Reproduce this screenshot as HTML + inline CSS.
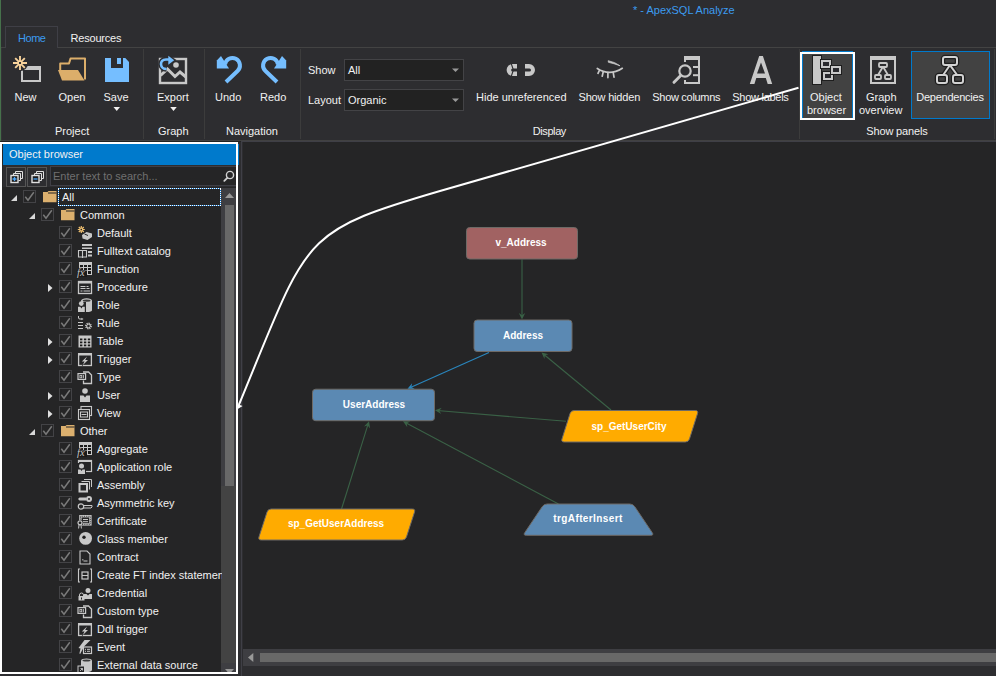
<!DOCTYPE html>
<html><head><meta charset="utf-8">
<style>
*{margin:0;padding:0;box-sizing:border-box}
html,body{width:996px;height:676px;overflow:hidden;background:#2d2d30;font-family:"Liberation Sans",sans-serif;font-size:11px;color:#f1f1f1}
.a{position:absolute}
.t{position:absolute;white-space:nowrap;line-height:13px}
.sep{position:absolute;width:1px;background:#3c3c3c}
svg{position:absolute;overflow:visible}
</style></head><body>
<!-- title bar -->
<div class="a" style="left:0;top:0;width:1px;height:141px;background:#46714b"></div><div class="a" style="left:1px;top:48px;width:1px;height:92px;background:#343437"></div>
<div class="t" style="left:633px;top:4px;color:#3c9bef;font-size:11px">* - ApexSQL Analyze</div>
<!-- tabs -->
<div class="a" style="left:1px;top:47px;width:995px;height:1px;background:#434343"></div>
<div class="a" style="left:5px;top:26px;width:53px;height:22px;border:1px solid #3f3f46;border-bottom:none;background:#2d2d30"></div>
<div class="t" style="left:18px;top:32px;color:#3c9bef;letter-spacing:-0.45px">Home</div>
<div class="t" style="left:70.5px;top:32px;letter-spacing:-0.2px">Resources</div>
<!-- ribbon bottom -->
<div class="a" style="left:1px;top:140px;width:995px;height:1px;background:#414141"></div>
<div class="a" style="left:0;top:141px;width:996px;height:535px;background:#2d2d30"></div>
<div class="a" style="left:0;top:141px;width:241px;height:1px;background:#222222"></div>
<!-- separators -->
<div class="sep" style="left:143px;top:49px;height:90px"></div>
<div class="sep" style="left:204px;top:49px;height:90px"></div>
<div class="sep" style="left:300px;top:49px;height:90px"></div>
<div class="sep" style="left:799px;top:49px;height:90px"></div>
<div class="sep" style="left:994px;top:49px;height:90px"></div>


<!-- RIBBON ICONS -->
<svg class="a" style="left:0;top:0" width="996" height="141" viewBox="0 0 996 141">
 <!-- New -->
 <g stroke="#2d2d30" stroke-width="0">
 </g>
 <rect x="22" y="67" width="18" height="14" fill="none" stroke="#c8c8c8" stroke-width="2"/>
 <rect x="21" y="66" width="20" height="4" fill="#c8c8c8"/>
 <circle cx="20" cy="63" r="8.2" fill="#2d2d30"/>
 <g stroke="#f7d29b" stroke-width="1.9">
  <path d="M20,56 V70 M13,63 H27 M15.2,58.2 L24.8,67.8 M24.8,58.2 L15.2,67.8"/>
 </g>
 <rect x="19" y="62" width="2" height="2" fill="#2d2d30"/>
 <!-- Open -->
 <path d="M60.2,70 V63.5 H69 L70.5,58.6 H85 V79.5" fill="none" stroke="#dcae6a" stroke-width="2" stroke-linejoin="round"/>
 <path d="M58,70 H78 L84.5,80.5 H62 Z" fill="#dcae6a"/>
 <!-- Save -->
 <path d="M105,58 H125.3 L129,62 V82 H105 Z M111,58 V68 H123 V58 Z" fill="#75beff" fill-rule="evenodd"/>
 <rect x="117" y="58" width="4" height="6" fill="#75beff"/>
 <path d="M113.5,107 h6.5 l-3.25,4 z" fill="#f1f1f1"/>
 <!-- Export -->
 <rect x="160" y="59" width="26" height="24" fill="none" stroke="#c8c8c8" stroke-width="2.4"/>
 <polyline points="160.5,75.5 167.5,69 175,76.5 180,72 186,77" fill="none" stroke="#c8c8c8" stroke-width="3"/>
 <circle cx="176" cy="65" r="2.8" fill="#c8c8c8"/>
 <path d="M166.5,69 C159.5,69 159,59.5 166,59.5 H169" fill="none" stroke="#2d2d30" stroke-width="5.5"/>
 <path d="M167.5,54 L176.5,60 L167.5,66.5 Z" fill="#2d2d30"/>
 <path d="M166.5,69 C159.5,69 159,59.5 166,59.5 H169" fill="none" stroke="#75beff" stroke-width="2.6"/>
 <path d="M168.3,55.8 L174.2,60.3 L168.3,64.8 Z" fill="#75beff"/>
 <path d="M170.25,107 h6.5 l-3.25,4 z" fill="#f1f1f1"/>
 <!-- Undo -->
 <g transform="translate(216,55)">
  <path d="M9,9.5 A7.5,7.5 0 1 1 21.5,16 L10,27" fill="none" stroke="#75beff" stroke-width="4" stroke-linejoin="round"/>
  <path d="M5,1 L0.8,5.5 V13.6 H13 Z" fill="#75beff"/>
 </g>
 <!-- Redo -->
 <g transform="translate(287,55) scale(-1,1)">
  <path d="M9,9.5 A7.5,7.5 0 1 1 21.5,16 L10,27" fill="none" stroke="#75beff" stroke-width="4" stroke-linejoin="round"/>
  <path d="M5,1 L0.8,5.5 V13.6 H13 Z" fill="#75beff"/>
 </g>
 <!-- combos -->
 <rect x="344.5" y="59.5" width="119" height="21" fill="#222222" stroke="#434346"/>
 <rect x="344.5" y="89.5" width="119" height="21" fill="#222222" stroke="#434346"/>
 <path d="M452,68.5 h7 l-3.5,3.5 z" fill="#999"/>
 <path d="M452,98.5 h7 l-3.5,3.5 z" fill="#999"/>
 <!-- Hide unreferenced -->
 <path d="M517,64 H512.6 A6,6 0 0 0 512.6,76 H517 V71.5 H512.6 A1.5,1.5 0 0 1 512.6,68.5 H517 Z" fill="#c8c8c8"/>
 <path d="M511.2,63.5 L513.4,70 L511.2,76.5" fill="none" stroke="#2d2d30" stroke-width="1.1"/>
 <path d="M525,64 H529 A6,6 0 0 1 529,76 H525 V71.5 H529.5 A1.5,1.5 0 0 0 529.5,68.5 H525 Z" fill="#c8c8c8"/>
 <!-- Show hidden (eye) -->
 <g fill="none" stroke="#c8c8c8" stroke-width="1.7" stroke-linecap="round">
  <path d="M597.3,68.5 Q609.5,76.5 622.3,68.3"/>
  <path d="M599.3,70.6 L598,73.3 M603.2,72 L602.2,76.2 M607.9,72.6 V77.6 M613.2,72.4 L614,77.2"/>
 </g>
 <path d="M608.2,60.7 Q615,62 620,65.8 Q614,63.5 608.4,62.3 Z" fill="#c8c8c8" stroke="#c8c8c8" stroke-width="0.8" stroke-linejoin="round"/>
 <!-- Show columns -->
 <path d="M685,62 V57 H699 V83 H685 V80" fill="none" stroke="#c8c8c8" stroke-width="2"/>
 <rect x="684" y="56" width="16" height="4" fill="#c8c8c8"/>
 <rect x="693" y="66" width="7" height="2" fill="#c8c8c8"/>
 <rect x="693" y="74.2" width="7" height="2" fill="#c8c8c8"/>
 <circle cx="685" cy="71" r="7.8" fill="#2d2d30"/>
 <circle cx="685" cy="71" r="5.7" fill="none" stroke="#c8c8c8" stroke-width="2.2"/>
 <path d="M680.5,75.8 L674,82.3" stroke="#c8c8c8" stroke-width="3" stroke-linecap="round"/>
 <!-- A -->
 <path d="M759.2,56 H762.9 L772.2,84 H767.7 L765.8,78.1 H756.3 L754.4,84 H749.8 Z M761,62.4 L757,73.6 H765 Z" fill="#c8c8c8" fill-rule="evenodd"/>
 <!-- Object browser button -->
 <rect x="802.5" y="51.5" width="50" height="67" fill="#424242" stroke="#007acc"/>
 <rect x="801" y="53" width="53" height="66" fill="none" stroke="#fff" stroke-width="2"/>
 <rect x="812" y="55" width="10" height="30" fill="#1e1e1e"/>
 <rect x="813" y="56" width="8" height="28" fill="#c8c8c8"/>
 <rect x="820" y="59" width="12" height="10" fill="#1e1e1e"/>
 <rect x="822" y="61" width="8" height="6" fill="#2a2a2e" stroke="#c8c8c8" stroke-width="2"/>
 <rect x="822" y="71" width="12" height="10" fill="#1e1e1e"/>
 <rect x="824" y="73" width="8" height="6" fill="#2a2a2e" stroke="#c8c8c8" stroke-width="2"/>
 <rect x="830" y="65" width="12" height="10" fill="#1e1e1e"/>
 <rect x="832" y="67" width="8" height="6" fill="#2a2a2e" stroke="#c8c8c8" stroke-width="2"/>
 <!-- Graph overview -->
 <rect x="871" y="57" width="24" height="26" fill="none" stroke="#c8c8c8" stroke-width="2"/>
 <rect x="870" y="56" width="26" height="4" fill="#c8c8c8"/>
 <g fill="none" stroke="#c8c8c8" stroke-width="1.8">
  <rect x="879" y="63" width="8" height="4" rx="1"/>
  <rect x="875" y="75" width="6" height="4" rx="1"/>
  <rect x="885" y="75" width="6" height="4" rx="1"/>
  <path d="M882.5,67.5 L878,75 M883.5,67.5 L888,75"/>
 </g>
 <!-- Dependencies button -->
 <rect x="911.5" y="51.5" width="78" height="67" fill="#424242" stroke="#007acc"/>
 <g fill="none" stroke="#1e1e1e" stroke-width="4.5" stroke-linejoin="round">
  <rect x="943" y="57" width="14" height="8" rx="2"/>
  <rect x="937" y="75" width="10" height="8" rx="2"/>
  <rect x="953" y="75" width="10" height="8" rx="2"/>
  <path d="M949.5,65.8 L943.5,74.5 M950.5,65.8 L956.8,74.5"/>
 </g>
 <g fill="none" stroke="#d2d2d2" stroke-width="2" stroke-linejoin="round">
  <rect x="943" y="57" width="14" height="8" rx="2"/>
  <rect x="937" y="75" width="10" height="8" rx="2"/>
  <rect x="953" y="75" width="10" height="8" rx="2"/>
  <path d="M949.5,65.8 L943.5,74.5 M950.5,65.8 L956.8,74.5"/>
 </g>
</svg>
<!-- RIBBON LABELS -->
<div class="t" style="left:14.5px;top:91px">New</div>
<div class="t" style="left:58.5px;top:91px">Open</div>
<div class="t" style="left:103.5px;top:91px">Save</div>
<div class="t" style="left:55px;top:125px">Project</div>
<div class="t" style="left:157px;top:91px">Export</div>
<div class="t" style="left:158px;top:125px">Graph</div>
<div class="t" style="left:215px;top:91px">Undo</div>
<div class="t" style="left:260px;top:91px">Redo</div>
<div class="t" style="left:226px;top:125px">Navigation</div>
<div class="t" style="left:308px;top:64px">Show</div>
<div class="t" style="left:308px;top:94px">Layout</div>
<div class="t" style="left:348px;top:64px">All</div>
<div class="t" style="left:348px;top:94px">Organic</div>
<div class="t" style="left:476px;top:91px">Hide unreferenced</div>
<div class="t" style="left:532.7px;top:125px;letter-spacing:-0.4px">Display</div>
<div class="t" style="left:578.5px;top:91px;letter-spacing:-0.18px">Show hidden</div>
<div class="t" style="left:652.3px;top:91px;letter-spacing:-0.3px">Show columns</div>
<div class="t" style="left:732.3px;top:91px;letter-spacing:-0.28px">Show labels</div>
<div class="t" style="left:810px;top:91px">Object</div>
<div class="t" style="left:807px;top:104px">browser</div>
<div class="t" style="left:866px;top:91px">Graph</div>
<div class="t" style="left:859px;top:104px">overview</div>
<div class="t" style="left:916.3px;top:91px;letter-spacing:-0.25px">Dependencies</div>
<div class="t" style="left:866.3px;top:125px;letter-spacing:-0.15px">Show panels</div>

<!-- CANVAS -->
<div class="a" style="left:241px;top:141px;width:1px;height:535px;background:#3f3f46"></div>
<div class="a" style="left:241px;top:141px;width:755px;height:1px;background:#3f3f46"></div>
<div class="a" style="left:243px;top:142px;width:753px;height:507px;background:#252526"></div>
<div class="a" style="left:243px;top:649px;width:753px;height:17px;background:#3e3e42"></div>
<div class="a" style="left:260px;top:653px;width:736px;height:9px;background:#686868"></div>
<svg class="a" style="left:0;top:0" width="996" height="676"><path d="M248,657.5 L253.3,653 V662 Z" fill="#999"/></svg>
<div class="a" style="left:242px;top:666px;width:754px;height:10px;background:#2d2d30"></div>

<!-- GRAPH -->
<svg class="a" style="left:0;top:0" width="996" height="676">
<line x1="522" y1="259.5" x2="522.00" y2="317.50" stroke="#3a6146" stroke-width="1.1"/><path d="M522.00,319.50 L518.80,313.00 L522.00,315.20 L525.20,313.00 Z" fill="#3a6146"/>
<line x1="489" y1="352.5" x2="409.33" y2="387.99" stroke="#2a86bd" stroke-width="1.1"/><path d="M407.50,388.80 L412.14,383.23 L411.43,387.05 L414.74,389.08 Z" fill="#2a86bd"/>
<line x1="611" y1="410" x2="543.04" y2="353.77" stroke="#3a6146" stroke-width="1.1"/><path d="M541.50,352.50 L548.55,354.18 L544.81,355.24 L544.47,359.11 Z" fill="#3a6146"/>
<line x1="566" y1="421.3" x2="436.99" y2="410.47" stroke="#3a6146" stroke-width="1.1"/><path d="M435.00,410.30 L441.74,407.66 L439.28,410.66 L441.21,414.03 Z" fill="#3a6146"/>
<line x1="341.5" y1="509" x2="368.40" y2="423.21" stroke="#3a6146" stroke-width="1.1"/><path d="M369.00,421.30 L370.11,428.46 L367.71,425.40 L364.00,426.54 Z" fill="#3a6146"/>
<line x1="558.5" y1="504" x2="404.77" y2="422.24" stroke="#3a6146" stroke-width="1.1"/><path d="M403.00,421.30 L410.24,421.53 L406.80,423.32 L407.24,427.18 Z" fill="#3a6146"/>
<path d="M466.50,230.70 Q466.5,227.5 469.70,227.50 L574.30,227.50 Q577.5,227.5 577.50,230.70 L577.50,255.80 Q577.5,259 574.30,259.00 L469.70,259.00 Q466.5,259 466.50,255.80 Z" fill="#a16262" stroke="#6e6a66" stroke-width="1"/>
<text x="521" y="246" text-anchor="middle" font-family="Liberation Sans" font-weight="bold" font-size="10" fill="#fff" letter-spacing="0">v_Address</text>
<path d="M474.00,323.20 Q474,320 477.20,320.00 L568.80,320.00 Q572,320 572.00,323.20 L572.00,348.30 Q572,351.5 568.80,351.50 L477.20,351.50 Q474,351.5 474.00,348.30 Z" fill="#5b89b3" stroke="#6e6a66" stroke-width="1"/>
<text x="523" y="339" text-anchor="middle" font-family="Liberation Sans" font-weight="bold" font-size="10" fill="#fff" letter-spacing="0">Address</text>
<path d="M312.50,392.40 Q312.5,389.2 315.70,389.20 L431.30,389.20 Q434.5,389.2 434.50,392.40 L434.50,417.50 Q434.5,420.7 431.30,420.70 L315.70,420.70 Q312.5,420.7 312.50,417.50 Z" fill="#5b89b3" stroke="#6e6a66" stroke-width="1"/>
<text x="374" y="408" text-anchor="middle" font-family="Liberation Sans" font-weight="bold" font-size="10" fill="#fff" letter-spacing="0">UserAddress</text>
<path d="M570.03,413.55 Q571,410.5 574.20,410.50 L695.30,410.50 Q698.5,410.5 697.53,413.55 L689.47,438.95 Q688.5,442 685.30,442.00 L564.20,442.00 Q561,442 561.97,438.95 Z" fill="#ffab00" stroke="#6e6a66" stroke-width="1"/>
<text x="629" y="430" text-anchor="middle" font-family="Liberation Sans" font-weight="bold" font-size="10" fill="#fff" letter-spacing="0">sp_GetUserCity</text>
<path d="M267.02,512.05 Q268,509 271.20,509.00 L412.30,509.00 Q415.5,509 414.52,512.05 L406.48,536.95 Q405.5,540 402.30,540.00 L261.20,540.00 Q258,540 258.98,536.95 Z" fill="#ffab00" stroke="#6e6a66" stroke-width="1"/>
<text x="336" y="527" text-anchor="middle" font-family="Liberation Sans" font-weight="bold" font-size="10" fill="#fff" letter-spacing="0">sp_GetUserAddress</text>
<path d="M542.22,506.66 Q544,504 547.20,504.00 L629.80,504.00 Q633,504 634.78,506.66 L652.22,532.64 Q654,535.3 650.80,535.30 L526.20,535.30 Q523,535.3 524.78,532.64 Z" fill="#5b89b3" stroke="#6e6a66" stroke-width="1"/>
<text x="588" y="522" text-anchor="middle" font-family="Liberation Sans" font-weight="bold" font-size="10" fill="#fff" letter-spacing="0.4">trgAfterInsert</text>
</svg>
<!-- /GRAPH -->
<!-- PANEL -->
<div class="a" style="left:2px;top:144px;width:234px;height:528px;background:#252526"></div>
<div class="a" style="left:3px;top:144px;width:236px;height:21px;background:#007acc"></div>
<div class="t" style="left:9px;top:148px">Object browser</div>


<!-- toolbar -->
<div class="a" style="left:3px;top:165px;width:233px;height:22px;background:#2d2d30"></div>
<div class="a" style="left:6px;top:167px;width:20px;height:20px;border:1px solid #555;background:#2d2d30"></div>
<div class="a" style="left:27px;top:167px;width:20px;height:20px;border:1px solid #555;background:#2d2d30"></div>
<div class="a" style="left:50px;top:166px;width:186px;height:20px;background:#252526;border-top:1px solid #3f3f46;border-bottom:1px solid #3f3f46;border-left:1px solid #3f3f46"></div>
<div class="t" style="left:53px;top:170px;color:#707070">Enter text to search...</div>
<svg class="a" style="left:0;top:160px" width="240" height="30">
 <g fill="none" stroke="#e0e0e0" stroke-width="1">
  <path d="M15.5,13.5 V11.5 H22.5 V18.5 H20.5"/>
  <path d="M13.5,15.5 V13.5 H20.5 V20.5 H18.5"/>
  <path d="M36.5,13.5 V11.5 H43.5 V18.5 H41.5"/>
  <path d="M34.5,15.5 V13.5 H41.5 V20.5 H39.5"/>
 </g>
 <rect x="11" y="15.5" width="7" height="7" fill="#1e1e1e" stroke="#e0e0e0" stroke-width="1.4"/>
 <rect x="32" y="15.5" width="7" height="7" fill="#1e1e1e" stroke="#e0e0e0" stroke-width="1.4"/>
 <path d="M12.5,19 H16.5 M14.5,17 V21" stroke="#4aa8ff" stroke-width="1.3"/>
 <path d="M33.5,19 H37.5" stroke="#4aa8ff" stroke-width="1.3"/>
 <circle cx="230" cy="15" r="3.6" fill="none" stroke="#d0d0d0" stroke-width="1.4"/>
 <path d="M227.3,17.8 L224.3,20.8" stroke="#d0d0d0" stroke-width="1.8" stroke-linecap="round"/>
</svg>
<!-- vscroll -->
<div class="a" style="left:221px;top:188px;width:15px;height:484px;background:#3e3e42"></div>
<div class="a" style="left:221px;top:486px;width:15px;height:177px;background:#434343"></div>
<div class="a" style="left:225px;top:205px;width:9px;height:281px;background:#686868"></div>
<svg class="a" style="left:220px;top:188px" width="18" height="486">
 <path d="M225,198 L229.5,193 L234,198 Z" transform="translate(-220,-188)" fill="#999"/>
 <path d="M225,669 L229.5,674 L234,669 Z" transform="translate(-220,-188)" fill="#999"/>
</svg>
<!-- TREE -->
<div class="a" style="left:3px;top:187px;width:219px;height:485px;overflow:hidden">
<svg class="a" style="left:-3px;top:-187px" width="240" height="700">
<path d="M11,201 L17,195 V201 Z" fill="#d8d8d8"/>
<rect x="23.5" y="190.5" width="12" height="12" fill="none" stroke="#434346"/>
<path d="M25.3,196.8 L28,200.2 L33.8,192.3" fill="none" stroke="#7a7a7a" stroke-width="1.5"/>
<path d="M43,192 H47.5 L48.5,191 H56.5 V202.2 H43 Z" fill="#dcb06e"/><path d="M48,193 H56.5" stroke="#252526" stroke-width="1"/>
<path d="M29,219 L35,213 V219 Z" fill="#d8d8d8"/>
<rect x="41.5" y="208.5" width="12" height="12" fill="none" stroke="#434346"/>
<path d="M43.3,214.8 L46,218.2 L51.8,210.3" fill="none" stroke="#7a7a7a" stroke-width="1.5"/>
<path d="M61,210 H65.5 L66.5,209 H74.5 V220.2 H61 Z" fill="#dcb06e"/><path d="M66,211 H74.5" stroke="#252526" stroke-width="1"/>
<rect x="59.5" y="226.5" width="12" height="12" fill="none" stroke="#434346"/>
<path d="M61.3,232.8 L64,236.2 L69.8,228.3" fill="none" stroke="#7a7a7a" stroke-width="1.5"/>
<g transform="translate(77,225)"><path d="M5,10 L9.5,7 L15,8.5 V12 L10.5,15 L5.5,13.5 Z" fill="#c8c8c8"/><path d="M7.5,9 L11,10.5" stroke="#252526" stroke-width="1"/>
<g stroke="#f0c070" stroke-width="1.2"><path d="M4.3,1 V8 M0.8,4.5 H7.8 M1.8,2 L6.8,7 M6.8,2 L1.8,7"/></g><rect x="3.6" y="3.8" width="1.4" height="1.4" fill="#252526"/></g>
<rect x="59.5" y="244.5" width="12" height="12" fill="none" stroke="#434346"/>
<path d="M61.3,250.8 L64,254.2 L69.8,246.3" fill="none" stroke="#7a7a7a" stroke-width="1.5"/>
<g transform="translate(77,243)"><g fill="#c8c8c8"><rect x="5" y="1" width="10" height="2"/><rect x="5" y="4.5" width="10" height="1.5"/><rect x="11" y="8" width="4" height="2"/><rect x="11" y="11.5" width="4" height="2"/></g>
<path d="M1.5,7.5 H9.5 V14 H1.5 Z M5.5,7.5 V15" fill="none" stroke="#c8c8c8" stroke-width="1.1"/></g>
<rect x="59.5" y="262.5" width="12" height="12" fill="none" stroke="#434346"/>
<path d="M61.3,268.8 L64,272.2 L69.8,264.3" fill="none" stroke="#7a7a7a" stroke-width="1.5"/>
<g transform="translate(77,261)"><rect x="2" y="1" width="13" height="13" fill="#c8c8c8"/><g fill="#1a1a1a"><rect x="3" y="4" width="3" height="2"/><rect x="7" y="4" width="3" height="2"/><rect x="11" y="4" width="3" height="2"/><rect x="3" y="7" width="3" height="2"/><rect x="7" y="7" width="3" height="2"/><rect x="11" y="7" width="3" height="2"/><rect x="7" y="10" width="3" height="3"/><rect x="11" y="10" width="3" height="3"/><rect x="2" y="9.5" width="8" height="6.5"/></g><text x="0" y="14.5" font-family="Liberation Serif" font-style="italic" font-size="10.5" fill="#c8c8c8" stroke="#1a1a1a" stroke-width="1.2" paint-order="stroke">fx</text></g>
<path d="M48,284 L52.5,288 L48,292 Z" fill="#e0e0e0"/>
<rect x="59.5" y="280.5" width="12" height="12" fill="none" stroke="#434346"/>
<path d="M61.3,286.8 L64,290.2 L69.8,282.3" fill="none" stroke="#7a7a7a" stroke-width="1.5"/>
<g transform="translate(77,279)"><rect x="1.5" y="2.5" width="13" height="12" fill="none" stroke="#c8c8c8" stroke-width="1.3"/><rect x="1" y="2" width="14" height="2.5" fill="#c8c8c8"/>
<g fill="#c8c8c8"><rect x="3.5" y="7" width="5" height="1"/><rect x="9.5" y="7" width="2" height="1"/><rect x="3.5" y="9" width="5" height="1"/><rect x="9.5" y="9" width="3" height="1"/><rect x="3.5" y="11.5" width="2" height="1"/><rect x="6.5" y="11.5" width="6.5" height="1"/></g></g>
<rect x="59.5" y="298.5" width="12" height="12" fill="none" stroke="#434346"/>
<path d="M61.3,304.8 L64,308.2 L69.8,300.3" fill="none" stroke="#7a7a7a" stroke-width="1.5"/>
<g transform="translate(77,297)"><ellipse cx="9.6" cy="3.6" rx="5.4" ry="2.4" fill="#c8c8c8"/><rect x="4.2" y="3.6" width="10.8" height="9.6" fill="#c8c8c8"/><ellipse cx="9.6" cy="13.2" rx="5.4" ry="1.8" fill="#c8c8c8"/><ellipse cx="9.6" cy="3.6" rx="4" ry="1.2" fill="#3a3a3a"/><rect x="0" y="5" width="9" height="11" fill="#252526"/><circle cx="4.3" cy="6.6" r="2.4" fill="#c8c8c8"/><path d="M1,9.8 H3.3 L4.4,11.4 L5.5,9.8 H7.8 V15 H1 Z" fill="#c8c8c8"/></g>
<rect x="59.5" y="316.5" width="12" height="12" fill="none" stroke="#434346"/>
<path d="M61.3,322.8 L64,326.2 L69.8,318.3" fill="none" stroke="#7a7a7a" stroke-width="1.5"/>
<g transform="translate(77,315)"><path d="M1.5,1 V3 Q1.5,4 3,4 H5" fill="none" stroke="#c8c8c8" stroke-width="1"/><path d="M4.5,2.8 L6.5,4 L4.5,5.2 Z" fill="#c8c8c8"/>
<g fill="#c8c8c8"><rect x="1" y="7" width="5" height="1"/><rect x="1" y="10" width="5" height="1"/><rect x="1" y="13" width="5" height="1"/></g>
<circle cx="11.5" cy="11" r="2.6" fill="none" stroke="#c8c8c8" stroke-width="1.6" stroke-dasharray="1.2 0.8"/><circle cx="11.5" cy="11" r="1.8" fill="none" stroke="#c8c8c8" stroke-width="1"/></g>
<path d="M48,338 L52.5,342 L48,346 Z" fill="#e0e0e0"/>
<rect x="59.5" y="334.5" width="12" height="12" fill="none" stroke="#434346"/>
<path d="M61.3,340.8 L64,344.2 L69.8,336.3" fill="none" stroke="#7a7a7a" stroke-width="1.5"/>
<g transform="translate(77,333)"><rect x="1.5" y="2.5" width="13" height="12" fill="#c8c8c8"/><g fill="#1a1a1a"><rect x="3.0" y="5.5" width="2.4" height="1.8"/><rect x="3.0" y="8.5" width="2.4" height="1.8"/><rect x="3.0" y="11.5" width="2.4" height="1.8"/><rect x="6.9" y="5.5" width="2.4" height="1.8"/><rect x="6.9" y="8.5" width="2.4" height="1.8"/><rect x="6.9" y="11.5" width="2.4" height="1.8"/><rect x="10.8" y="5.5" width="2.4" height="1.8"/><rect x="10.8" y="8.5" width="2.4" height="1.8"/><rect x="10.8" y="11.5" width="2.4" height="1.8"/></g></g>
<path d="M48,356 L52.5,360 L48,364 Z" fill="#e0e0e0"/>
<rect x="59.5" y="352.5" width="12" height="12" fill="none" stroke="#434346"/>
<path d="M61.3,358.8 L64,362.2 L69.8,354.3" fill="none" stroke="#7a7a7a" stroke-width="1.5"/>
<g transform="translate(77,351)"><rect x="1.6" y="3" width="12.8" height="11.5" fill="none" stroke="#c8c8c8" stroke-width="1.3"/><rect x="1" y="2" width="14" height="2.5" fill="#c8c8c8"/>
<path d="M10,5.5 L4.8,10.4 H7.6 L5.4,14.6 L11,8.9 H8.2 Z" fill="#c8c8c8" stroke="#252526" stroke-width="0.8" paint-order="stroke"/></g>
<rect x="59.5" y="370.5" width="12" height="12" fill="none" stroke="#434346"/>
<path d="M61.3,376.8 L64,380.2 L69.8,372.3" fill="none" stroke="#7a7a7a" stroke-width="1.5"/>
<g transform="translate(77,369)"><path d="M6,3 H11.5 L14.5,6 V14.5 H6.5 V11.5" fill="none" stroke="#c8c8c8" stroke-width="1.3"/><rect x="1" y="4.6" width="7.6" height="5.8" fill="#252526" stroke="#c8c8c8" stroke-width="1.2"/><rect x="2.9" y="6.4" width="1.8" height="2.4" fill="none" stroke="#c8c8c8" stroke-width="0.8"/><rect x="5.8" y="6" width="1" height="3.2" fill="#c8c8c8"/></g>
<path d="M48,392 L52.5,396 L48,400 Z" fill="#e0e0e0"/>
<rect x="59.5" y="388.5" width="12" height="12" fill="none" stroke="#434346"/>
<path d="M61.3,394.8 L64,398.2 L69.8,390.3" fill="none" stroke="#7a7a7a" stroke-width="1.5"/>
<g transform="translate(77,387)"><circle cx="8" cy="4" r="2.8" fill="#c8c8c8"/><path d="M3,8.5 H6.5 L8,10.5 L9.5,8.5 H13 V15 H3 Z" fill="#c8c8c8"/></g>
<path d="M48,410 L52.5,414 L48,418 Z" fill="#e0e0e0"/>
<rect x="59.5" y="406.5" width="12" height="12" fill="none" stroke="#434346"/>
<path d="M61.3,412.8 L64,416.2 L69.8,408.3" fill="none" stroke="#7a7a7a" stroke-width="1.5"/>
<g transform="translate(77,405)"><rect x="4" y="1.5" width="10.5" height="9" fill="none" stroke="#c8c8c8" stroke-width="1.1"/><rect x="1.5" y="4.5" width="11" height="10" fill="#252526" stroke="#c8c8c8" stroke-width="1.1"/><rect x="3.5" y="7" width="7" height="5" fill="none" stroke="#c8c8c8" stroke-width="1"/><rect x="4.5" y="9" width="5" height="1" fill="#c8c8c8"/></g>
<path d="M29,435 L35,429 V435 Z" fill="#d8d8d8"/>
<rect x="41.5" y="424.5" width="12" height="12" fill="none" stroke="#434346"/>
<path d="M43.3,430.8 L46,434.2 L51.8,426.3" fill="none" stroke="#7a7a7a" stroke-width="1.5"/>
<path d="M61,426 H65.5 L66.5,425 H74.5 V436.2 H61 Z" fill="#dcb06e"/><path d="M66,427 H74.5" stroke="#252526" stroke-width="1"/>
<rect x="59.5" y="442.5" width="12" height="12" fill="none" stroke="#434346"/>
<path d="M61.3,448.8 L64,452.2 L69.8,444.3" fill="none" stroke="#7a7a7a" stroke-width="1.5"/>
<g transform="translate(77,441)"><rect x="2" y="1" width="13" height="13" fill="#c8c8c8"/><g fill="#1a1a1a"><rect x="3" y="4" width="3" height="2"/><rect x="7" y="4" width="3" height="2"/><rect x="11" y="4" width="3" height="2"/><rect x="3" y="7" width="3" height="2"/><rect x="7" y="7" width="3" height="2"/><rect x="11" y="7" width="3" height="2"/><rect x="7" y="10" width="3" height="3"/><rect x="11" y="10" width="3" height="3"/><rect x="2" y="9.5" width="8" height="6.5"/></g><text x="0" y="14.5" font-family="Liberation Serif" font-style="italic" font-size="10.5" fill="#c8c8c8" stroke="#1a1a1a" stroke-width="1.2" paint-order="stroke">fx</text></g>
<rect x="59.5" y="460.5" width="12" height="12" fill="none" stroke="#434346"/>
<path d="M61.3,466.8 L64,470.2 L69.8,462.3" fill="none" stroke="#7a7a7a" stroke-width="1.5"/>
<g transform="translate(77,459)"><rect x="1.5" y="1.5" width="13" height="11" fill="none" stroke="#c8c8c8" stroke-width="1.2"/><rect x="1" y="1" width="14" height="2" fill="#c8c8c8"/>
<rect x="0" y="4" width="9" height="12" fill="#252526"/><circle cx="4.5" cy="7" r="2.5" fill="#c8c8c8"/><path d="M1,10.5 H3.5 L4.5,12 L5.5,10.5 H8 V15 H1 Z" fill="#c8c8c8"/></g>
<rect x="59.5" y="478.5" width="12" height="12" fill="none" stroke="#434346"/>
<path d="M61.3,484.8 L64,488.2 L69.8,480.3" fill="none" stroke="#7a7a7a" stroke-width="1.5"/>
<g transform="translate(77,477)"><path d="M7,2.5 H14.5 V10" fill="none" stroke="#c8c8c8" stroke-width="1"/><path d="M4.5,4.5 H12.5 V12.5" fill="none" stroke="#c8c8c8" stroke-width="1"/><rect x="2.5" y="7" width="7.5" height="7.5" fill="#252526" stroke="#c8c8c8" stroke-width="2"/></g>
<rect x="59.5" y="496.5" width="12" height="12" fill="none" stroke="#434346"/>
<path d="M61.3,502.8 L64,506.2 L69.8,498.3" fill="none" stroke="#7a7a7a" stroke-width="1.5"/>
<g transform="translate(77,495)"><circle cx="12" cy="4" r="3" fill="#c8c8c8"/><circle cx="12" cy="4" r="1" fill="#252526"/><path d="M1,4 L2.5,2.5 H9 V5.5 H2.5 Z" fill="#c8c8c8"/>
<circle cx="4" cy="11.5" r="2.7" fill="none" stroke="#c8c8c8" stroke-width="1.2"/><path d="M6.5,10.5 H15 V12 L14,13 H6.5" fill="none" stroke="#c8c8c8" stroke-width="1"/></g>
<rect x="59.5" y="514.5" width="12" height="12" fill="none" stroke="#434346"/>
<path d="M61.3,520.8 L64,524.2 L69.8,516.3" fill="none" stroke="#7a7a7a" stroke-width="1.5"/>
<g transform="translate(77,513)"><rect x="2.2" y="2" width="12.4" height="10.6" fill="#c8c8c8"/><rect x="3.5" y="3.3" width="9.8" height="8" fill="none" stroke="#252526" stroke-width="0.9" stroke-dasharray="0.9 0.9"/><rect x="4.6" y="4.4" width="7.6" height="5.8" fill="#252526"/><rect x="6" y="6" width="5" height="1" fill="#c8c8c8"/><rect x="6" y="8.2" width="5" height="1" fill="#c8c8c8"/><circle cx="3" cy="10" r="3" fill="#252526"/><circle cx="3" cy="9.8" r="2" fill="none" stroke="#c8c8c8" stroke-width="1.2"/><path d="M2,11.8 L1.6,15.5 M4,11.8 L4.4,15.5" stroke="#c8c8c8" stroke-width="1"/></g>
<rect x="59.5" y="532.5" width="12" height="12" fill="none" stroke="#434346"/>
<path d="M61.3,538.8 L64,542.2 L69.8,534.3" fill="none" stroke="#7a7a7a" stroke-width="1.5"/>
<g transform="translate(77,531)"><circle cx="8.6" cy="7.4" r="6.4" fill="#c8c8c8"/><circle cx="7" cy="6.2" r="1.7" fill="#1e1e1e"/></g>
<rect x="59.5" y="550.5" width="12" height="12" fill="none" stroke="#434346"/>
<path d="M61.3,556.8 L64,560.2 L69.8,552.3" fill="none" stroke="#7a7a7a" stroke-width="1.5"/>
<g transform="translate(77,549)"><path d="M3,2 H10 L13,5 V15 H3 Z" fill="none" stroke="#c8c8c8" stroke-width="1.1"/><rect x="5" y="10" width="1.5" height="1.5" fill="#888"/><rect x="6.5" y="11.5" width="4" height="1" fill="#c8c8c8"/></g>
<rect x="59.5" y="568.5" width="12" height="12" fill="none" stroke="#434346"/>
<path d="M61.3,574.8 L64,578.2 L69.8,570.3" fill="none" stroke="#7a7a7a" stroke-width="1.5"/>
<g transform="translate(77,567)"><path d="M3,2 H1.5 V15 H3 M13,2 H14.5 V15 H13" fill="none" stroke="#c8c8c8" stroke-width="1.1"/><rect x="5" y="5" width="6" height="7" fill="none" stroke="#c8c8c8" stroke-width="1.2"/><rect x="5" y="8" width="6" height="1" fill="#c8c8c8"/></g>
<rect x="59.5" y="586.5" width="12" height="12" fill="none" stroke="#434346"/>
<path d="M61.3,592.8 L64,596.2 L69.8,588.3" fill="none" stroke="#7a7a7a" stroke-width="1.5"/>
<g transform="translate(77,585)"><circle cx="11" cy="5.5" r="2.5" fill="#c8c8c8"/><path d="M7,9 H9.5 L11,10.5 L12.5,9 H15 V14 H7 Z" fill="#c8c8c8"/>
<path d="M2.5,11 V10 A2,2 0 0 1 6.5,10 V11" fill="none" stroke="#c8c8c8" stroke-width="1"/><rect x="1.5" y="11" width="6" height="4.5" fill="#c8c8c8"/><rect x="4" y="12.5" width="1" height="2" fill="#252526"/></g>
<rect x="59.5" y="604.5" width="12" height="12" fill="none" stroke="#434346"/>
<path d="M61.3,610.8 L64,614.2 L69.8,606.3" fill="none" stroke="#7a7a7a" stroke-width="1.5"/>
<g transform="translate(77,603)"><path d="M6,3 H11.5 L14.5,6 V14.5 H6.5 V11.5" fill="none" stroke="#c8c8c8" stroke-width="1.3"/><rect x="1" y="4.6" width="7.6" height="5.8" fill="#252526" stroke="#c8c8c8" stroke-width="1.2"/><rect x="2.9" y="6.4" width="1.8" height="2.4" fill="none" stroke="#c8c8c8" stroke-width="0.8"/><rect x="5.8" y="6" width="1" height="3.2" fill="#c8c8c8"/></g>
<rect x="59.5" y="622.5" width="12" height="12" fill="none" stroke="#434346"/>
<path d="M61.3,628.8 L64,632.2 L69.8,624.3" fill="none" stroke="#7a7a7a" stroke-width="1.5"/>
<g transform="translate(77,621)"><rect x="1.6" y="3" width="12.8" height="11.5" fill="none" stroke="#c8c8c8" stroke-width="1.3"/><rect x="1" y="2" width="14" height="2.5" fill="#c8c8c8"/>
<path d="M10,5.5 L4.8,10.4 H7.6 L5.4,14.6 L11,8.9 H8.2 Z" fill="#c8c8c8" stroke="#252526" stroke-width="0.8" paint-order="stroke"/></g>
<rect x="59.5" y="640.5" width="12" height="12" fill="none" stroke="#434346"/>
<path d="M61.3,646.8 L64,650.2 L69.8,642.3" fill="none" stroke="#7a7a7a" stroke-width="1.5"/>
<g transform="translate(77,639)"><path d="M7.5,1 H13.5 L7,7.5 L3.2,15 L2.4,14.6 L3.5,9.5 L1.5,9 Z" fill="#c8c8c8"/><rect x="6.5" y="8" width="8" height="6.5" fill="#252526" stroke="#c8c8c8" stroke-width="1.2"/><g fill="#c8c8c8"><rect x="8" y="9.8" width="1" height="1"/><rect x="10" y="9.8" width="3" height="1"/><rect x="8" y="11.8" width="1" height="1"/><rect x="10" y="11.8" width="3" height="1"/></g></g>
<rect x="59.5" y="658.5" width="12" height="12" fill="none" stroke="#434346"/>
<path d="M61.3,664.8 L64,668.2 L69.8,660.3" fill="none" stroke="#7a7a7a" stroke-width="1.5"/>
<g transform="translate(77,657)"><path d="M4,3.5 A5.5,2 0 0 1 15,3.5 V13 A5.5,2 0 0 1 4,13 Z" fill="#c8c8c8"/><ellipse cx="9.5" cy="3.5" rx="4" ry="1.1" fill="#3a3a3a"/><rect x="1" y="9" width="6.5" height="7" fill="#252526" stroke="#c8c8c8" stroke-width="1"/><path d="M3,14 L5.5,11.5 M3.5,11.5 H5.5 V13.5" fill="none" stroke="#c8c8c8" stroke-width="0.9"/></g>
</svg>
<div class="a" style="left:-3px;top:-187px;width:240px;height:700px">
<div class="t" style="left:62px;top:191px">All</div>
<div class="t" style="left:80px;top:209px">Common</div>
<div class="t" style="left:97px;top:227px">Default</div>
<div class="t" style="left:97px;top:245px">Fulltext catalog</div>
<div class="t" style="left:97px;top:263px">Function</div>
<div class="t" style="left:97px;top:281px">Procedure</div>
<div class="t" style="left:97px;top:299px">Role</div>
<div class="t" style="left:97px;top:317px">Rule</div>
<div class="t" style="left:97px;top:335px">Table</div>
<div class="t" style="left:97px;top:353px">Trigger</div>
<div class="t" style="left:97px;top:371px">Type</div>
<div class="t" style="left:97px;top:389px">User</div>
<div class="t" style="left:97px;top:407px">View</div>
<div class="t" style="left:80px;top:425px">Other</div>
<div class="t" style="left:97px;top:443px">Aggregate</div>
<div class="t" style="left:97px;top:461px">Application role</div>
<div class="t" style="left:97px;top:479px">Assembly</div>
<div class="t" style="left:97px;top:497px">Asymmetric key</div>
<div class="t" style="left:97px;top:515px">Certificate</div>
<div class="t" style="left:97px;top:533px">Class member</div>
<div class="t" style="left:97px;top:551px">Contract</div>
<div class="t" style="left:97px;top:569px">Create FT index statement</div>
<div class="t" style="left:97px;top:587px">Credential</div>
<div class="t" style="left:97px;top:605px">Custom type</div>
<div class="t" style="left:97px;top:623px">Ddl trigger</div>
<div class="t" style="left:97px;top:641px">Event</div>
<div class="t" style="left:97px;top:659px">External data source</div>
</div>
<div class="a" style="left:55px;top:1px;width:163px;height:18px;border:1px solid #0a70c8"></div><div class="a" style="left:55px;top:1px;width:163px;height:18px;border:1px dotted #fff"></div>
</div>

<!-- white annotation rect -->
<div class="a" style="left:0;top:142px;width:238px;height:532px;border:2px solid #fff"></div>

<!-- annotation curve -->
<svg class="a" style="left:0;top:0" width="996" height="676">
 <path d="M798.5,87.8 L440,191 C298.65,232.23 309,235.6 238.8,405" fill="none" stroke="#fff" stroke-width="2"/>
 <path d="M237,409.5 L236,403 L238.6,404.5 L242.6,405.9 Z" fill="#fff"/>
</svg>
</body></html>
